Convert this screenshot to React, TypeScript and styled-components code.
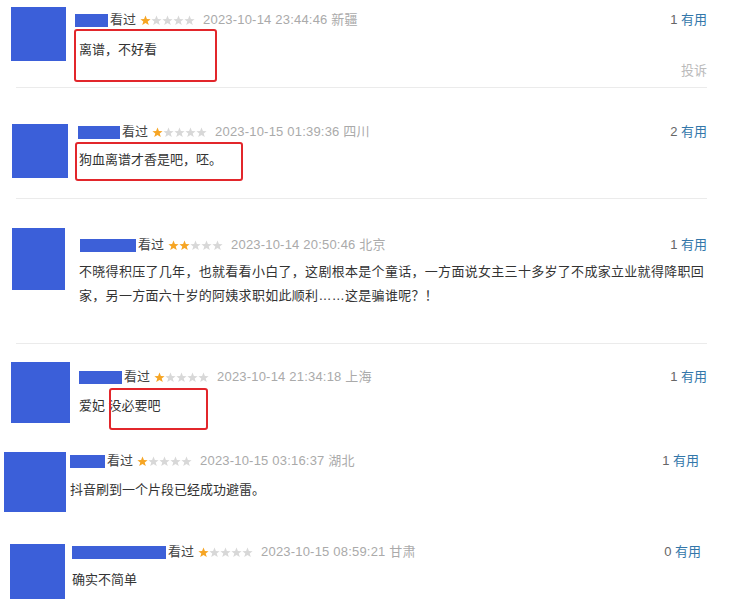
import React from 'react';
import styled, { createGlobalStyle } from 'styled-components';

const Global = createGlobalStyle`
  html, body { margin: 0; padding: 0; background: #fff; }
  body { font-family: "Liberation Sans", "Noto Sans CJK SC", sans-serif; color: #333; }
`;

const Page = styled.div`
  width: 729px;
  height: 604px;
  overflow: hidden;
  display: flex;
  flex-direction: column;
`;

const Row = styled.div<{ $h: number; $left: number }>`
  display: flex;
  align-items: flex-start;
  flex-shrink: 0;
  height: ${p => p.$h}px;
  padding-left: ${p => p.$left}px;
`;

const Separator = styled.div`
  height: 1px;
  flex-shrink: 0;
  margin: 0 22px 0 16px;
  background: #ebebeb;
`;

const Avatar = styled.div<{ $w: number; $h: number; $top: number }>`
  flex-shrink: 0;
  width: ${p => p.$w}px;
  height: ${p => p.$h}px;
  margin-top: ${p => p.$top}px;
  background: #3b5fd9;
`;

const Body = styled.div<{ $gap: number; $right: number }>`
  position: relative;
  flex: 1;
  display: flex;
  flex-direction: column;
  margin-left: ${p => p.$gap}px;
  padding-right: ${p => p.$right}px;
`;

const Header = styled.div<{ $top: number }>`
  display: flex;
  align-items: center;
  height: 16px;
  margin-top: ${p => p.$top}px;
  font-size: 13px;
  line-height: 16px;
  white-space: nowrap;
`;

const NameBar = styled.div<{ $w: number; $off: number }>`
  width: ${p => p.$w}px;
  height: 13px;
  margin-left: ${p => p.$off}px;
  margin-right: 2px;
  background: #3d60d8;
  flex-shrink: 0;
`;

const Seen = styled.span`
  color: #444;
`;

const StarBox = styled.svg`
  margin-left: 4px;
  margin-right: 8px;
  flex-shrink: 0;
`;

const Time = styled.span`
  color: #aaa;
  letter-spacing: 0.2px;
`;

const Useful = styled.span`
  margin-left: auto;
  color: #666;
`;

const UsefulLink = styled.span`
  color: #3377aa;
`;

const Content = styled.div<{ $top: number; $lh: number; $ls: number }>`
  margin-top: ${p => p.$top}px;
  font-size: 13px;
  line-height: ${p => p.$lh}px;
  letter-spacing: ${p => p.$ls}px;
  color: #333;
  white-space: pre;
`;

const Report = styled.div`
  align-self: flex-end;
  margin-top: 3px;
  font-size: 13px;
  line-height: 16px;
  color: #bbb;
`;

const Mark = styled.div`
  position: absolute;
  box-sizing: border-box;
  border: 2px solid #e2262b;
  border-radius: 3px;
  pointer-events: none;
`;

const STAR = '5.5,0.6 6.9,4.1 10.6,4.2 7.7,6.5 8.8,10.1 5.5,8 2.2,10.1 3.3,6.5 0.4,4.2 4.1,4.1';

function Stars({ n }: { n: number }) {
  return (
    <StarBox width="55" height="11" viewBox="0 0 55 11">
      {[0, 1, 2, 3, 4].map(i => (
        <polygon
          key={i}
          points={STAR}
          transform={`translate(${i * 11} 0)`}
          fill={i < n ? '#f6a524' : '#d8d8d8'}
        />
      ))}
    </StarBox>
  );
}

type Item = {
  h: number;
  left: number;
  av: { w: number; h: number; top: number };
  gap: number;
  right: number;
  headerTop: number;
  bar: { w: number; off: number };
  stars: number;
  time: string;
  place: string;
  useful: number;
  text: string;
  contentTop: number;
  lh?: number;
  ls?: number;
  report?: boolean;
  mark?: { l: number; t: number; w: number; h: number };
  sep?: boolean;
};

const items: Item[] = [
  {
    h: 87, left: 11, av: { w: 55, h: 54, top: 7 }, gap: 13, right: 22, headerTop: 12,
    bar: { w: 33, off: -4 }, stars: 1, time: '2023-10-14 23:44:46', place: '新疆', useful: 1,
    text: '离谱，不好看', contentTop: 12, report: true, mark: { l: -5, t: 29, w: 143, h: 53 }, sep: true,
  },
  {
    h: 110, left: 12, av: { w: 56, h: 54, top: 36 }, gap: 11, right: 22, headerTop: 36,
    bar: { w: 42, off: -1 }, stars: 1, time: '2023-10-15 01:39:36', place: '四川', useful: 2,
    text: '狗血离谱才香是吧，呸。', contentTop: 10, mark: { l: -4, t: 54, w: 168, h: 39 }, sep: true,
  },
  {
    h: 144, left: 12, av: { w: 53, h: 62, top: 29 }, gap: 14, right: 22, headerTop: 38,
    bar: { w: 56, off: 1 }, stars: 2, time: '2023-10-14 20:50:46', place: '北京', useful: 1,
    text: '不晓得积压了几年，也就看看小白了，这剧根本是个童话，一方面说女主三十多岁了不成家立业就得降职回\n家，另一方面六十岁的阿姨求职如此顺利……这是骗谁呢？！',
    contentTop: 7, lh: 24, ls: 0.3, sep: true,
  },
  {
    h: 95, left: 11, av: { w: 59, h: 61, top: 18 }, gap: 9, right: 22, headerTop: 25,
    bar: { w: 43, off: 0 }, stars: 1, time: '2023-10-14 21:34:18', place: '上海', useful: 1,
    text: '爱妃 没必要吧', contentTop: 11, mark: { l: 30, t: 44, w: 99, h: 42 },
  },
  {
    h: 90, left: 4, av: { w: 62, h: 60, top: 13 }, gap: 4, right: 30, headerTop: 14,
    bar: { w: 35, off: 0 }, stars: 1, time: '2023-10-15 03:16:37', place: '湖北', useful: 1,
    text: '抖音刷到一个片段已经成功避雷。', contentTop: 11,
  },
  {
    h: 74, left: 10, av: { w: 55, h: 55, top: 15 }, gap: 7, right: 28, headerTop: 15,
    bar: { w: 94, off: 0 }, stars: 1, time: '2023-10-15 08:59:21', place: '甘肃', useful: 0,
    text: '确实不简单', contentTop: 10,
  },
];

function Comment({ it }: { it: Item }) {
  return (
    <>
      <Row $h={it.h} $left={it.left}>
        <Avatar $w={it.av.w} $h={it.av.h} $top={it.av.top} />
        <Body $gap={it.gap} $right={it.right}>
          <Header $top={it.headerTop}>
            <NameBar $w={it.bar.w} $off={it.bar.off} />
            <Seen>看过</Seen>
            <Stars n={it.stars} />
            <Time>{it.time} {it.place}</Time>
            <Useful>
              {it.useful} <UsefulLink>有用</UsefulLink>
            </Useful>
          </Header>
          <Content $top={it.contentTop} $lh={it.lh ?? 20} $ls={it.ls ?? 0}>
            {it.text}
          </Content>
          {it.report && <Report>投诉</Report>}
          {it.mark && (
            <Mark style={{ left: it.mark.l, top: it.mark.t, width: it.mark.w, height: it.mark.h }} />
          )}
        </Body>
      </Row>
      {it.sep && <Separator />}
    </>
  );
}

export default function App() {
  return (
    <>
      <Global />
      <Page>
        {items.map((it, i) => (
          <Comment key={i} it={it} />
        ))}
      </Page>
    </>
  );
}
